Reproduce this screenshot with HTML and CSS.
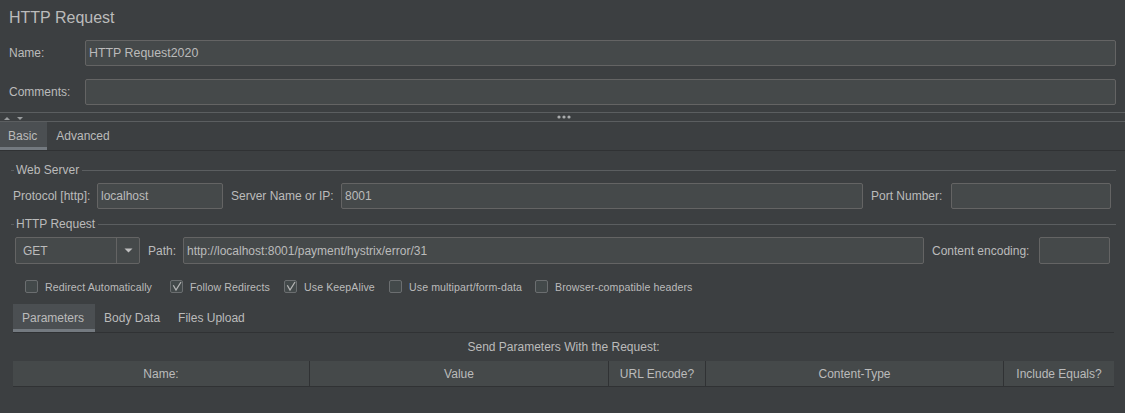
FILE: index.html
```html
<!DOCTYPE html>
<html>
<head>
<meta charset="utf-8">
<link rel="stylesheet" href="styles.css">
</head>
<body>
<div class="app">
  <div class="title">HTTP Request</div>
  <div class="field-row">
    <span class="lbl">Name:</span>
    <div class="input">HTTP Request2020</div>
  </div>
  <div class="field-row">
    <span class="lbl">Comments:</span>
    <div class="input"></div>
  </div>
  <div class="splitter">
    <svg class="arrows" width="26" height="8" viewBox="0 0 26 8">
      <polygon points="4,7 10,7 7,4" fill="#9a9d9f"/>
      <polygon points="17,4 23,4 20,7" fill="#9a9d9f"/>
    </svg>
    <svg class="dots" width="14" height="4" viewBox="0 0 14 4">
      <circle cx="2" cy="2" r="1.6" fill="#a9abad"/>
      <circle cx="7" cy="2" r="1.6" fill="#a9abad"/>
      <circle cx="12" cy="2" r="1.6" fill="#a9abad"/>
    </svg>
  </div>
  <div class="tabs main-tabs">
    <div class="tab active">Basic</div>
    <div class="tab">Advanced</div>
  </div>
  <div class="content">
    <div class="group-title"><span>Web Server</span></div>
    <div class="server-row">
      <span class="lbl-protocol">Protocol [http]:</span>
      <div class="input w-protocol">localhost</div>
      <span class="lbl-server">Server Name or IP:</span>
      <div class="input grow">8001</div>
      <span class="lbl-port">Port Number:</span>
      <div class="input w-port"></div>
    </div>
    <div class="group-title"><span>HTTP Request</span></div>
    <div class="req-row">
      <div class="combo">
        <span class="combo-text">GET</span>
        <span class="combo-btn">
          <svg width="9" height="5" viewBox="0 0 9 5"><polygon points="0.5,0.5 8.5,0.5 4.5,4.5" fill="#c0c0c0"/></svg>
        </span>
      </div>
      <span class="lbl-path">Path:</span>
      <div class="input grow tall">http://localhost:8001/payment/hystrix/error/31</div>
      <span class="lbl-enc">Content encoding:</span>
      <div class="input w-enc tall"></div>
    </div>
    <div class="checks">
      <div class="check"><span class="box"></span><span class="ctext">Redirect Automatically</span></div>
      <div class="check"><span class="box"><svg width="13" height="13" viewBox="0 0 13 13"><polyline points="3.3,5.3 6,10 11,2" fill="none" stroke="#b4b4b4" stroke-width="1.3"/></svg></span><span class="ctext">Follow Redirects</span></div>
      <div class="check"><span class="box"><svg width="13" height="13" viewBox="0 0 13 13"><polyline points="3.3,5.3 6,10 11,2" fill="none" stroke="#b4b4b4" stroke-width="1.3"/></svg></span><span class="ctext">Use KeepAlive</span></div>
      <div class="check"><span class="box"></span><span class="ctext">Use multipart/form-data</span></div>
      <div class="check"><span class="box"></span><span class="ctext">Browser-compatible headers</span></div>
    </div>
    <div class="tabs sub-tabs">
      <div class="tab active">Parameters</div>
      <div class="tab">Body Data</div>
      <div class="tab">Files Upload</div>
    </div>
    <div class="caption">Send Parameters With the Request:</div>
    <div class="table-head">
      <div class="th">Name:</div>
      <div class="th">Value</div>
      <div class="th">URL Encode?</div>
      <div class="th">Content-Type</div>
      <div class="th">Include Equals?</div>
    </div>
  </div>
</div>
</body>
</html>
```
FILE: styles.css
```css
html, body {
  margin: 0;
  padding: 0;
  background: #3c3f41;
}
body {
  width: 1125px;
  height: 413px;
  overflow: hidden;
  font-family: "Liberation Sans", Arial, sans-serif;
  font-size: 12px;
  color: #bbbbbb;
}
.app {
  display: flex;
  flex-direction: column;
}
.title {
  height: 32px;
  padding: 8px 9px 0;
  font-size: 16px;
  line-height: 20px;
}
.field-row {
  display: flex;
  align-items: center;
  height: 26px;
  padding: 0 9px;
  margin-bottom: 13px;
}
.field-row .lbl {
  width: 76px;
  flex: none;
}
.input {
  box-sizing: border-box;
  height: 26px;
  background: #45494a;
  border: 1px solid #646464;
  border-radius: 2px;
  padding: 0 3px;
  display: flex;
  align-items: center;
  white-space: nowrap;
  overflow: hidden;
  flex: 1;
}
.field-row .input {
  font-size: 12.4px;
}
.splitter {
  margin-top: -6px;
  height: 8px;
  border-top: 1px solid #5b5e60;
  border-bottom: 1px solid #5b5e60;
  display: flex;
  align-items: center;
}
.arrows {
  flex: none;
}
.dots {
  margin-left: 531px;
  flex: none;
}
.tabs {
  display: flex;
  height: 28px;
  border-bottom: 1px solid #303234;
}
.tab {
  display: flex;
  align-items: center;
  padding: 0 9px;
}
.tab.active {
  background: #4b4f52;
  box-shadow: inset 0 -3px 0 #747a80;
}
.main-tabs .tab {
  padding: 0 9px 0 9px;
}
.main-tabs .tab.active {
  padding: 0 10px 0 8px;
}
.content {
  padding: 0 9px 0 11px;
  display: flex;
  flex-direction: column;
}
.group-title {
  margin-top: 11px;
  height: 16px;
  display: flex;
  align-items: center;
}
.group-title::before {
  content: "";
  width: 3px;
  height: 1px;
  background: #5b5e60;
  margin-right: 2px;
}
.group-title::after {
  content: "";
  flex: 1;
  height: 1px;
  background: #5b5e60;
  margin-left: 3px;
}
.group-title + .req-row {
  margin-top: 5px;
}
.server-row {
  margin-top: 5px;
  height: 26px;
  display: flex;
  align-items: center;
  padding: 0 5px 0 2px;
}
.server-row + .group-title {
  margin-top: 7px;
}
.lbl-protocol { width: 84px; flex: none; }
.w-protocol { width: 126px; flex: none; }
.lbl-server { width: 110px; padding-left: 8px; flex: none; }
.grow { flex: 1; }
.lbl-port { width: 80px; padding-left: 8px; flex: none; }
.w-port { width: 160px; flex: none; }
.req-row {
  height: 27px;
  display: flex;
  align-items: center;
  padding: 0 6px 0 4px;
}
.tall { height: 27px; }
.combo {
  box-sizing: border-box;
  width: 125px;
  height: 27px;
  flex: none;
  display: flex;
  background: #45494a;
  border: 1px solid #646464;
  border-radius: 2px;
}
.combo-text {
  flex: 1;
  display: flex;
  align-items: center;
  padding-left: 7px;
}
.combo-btn {
  width: 22px;
  border-left: 1px solid #646464;
  display: flex;
  align-items: center;
  justify-content: center;
}
.lbl-path { width: 35px; padding-left: 8px; flex: none; }
.lbl-enc { width: 107px; padding-left: 8px; flex: none; }
.w-enc { width: 71px; flex: none; }
.checks {
  margin-top: 15px;
  height: 15px;
  display: grid;
  grid-template-columns: 145px 114px 105px 146px auto;
  padding-left: 14px;
  align-items: center;
}
.check {
  display: flex;
  align-items: center;
}
.box {
  box-sizing: border-box;
  width: 13px;
  height: 13px;
  border: 1px solid #6b6e70;
  border-radius: 2px;
  background: #43494a;
  flex: none;
  position: relative;
}
.box svg {
  position: absolute;
  left: -1px;
  top: -1px;
}
.ctext {
  margin-left: 7px;
  font-size: 10.6px;
  letter-spacing: 0.1px;
  white-space: nowrap;
}
.sub-tabs {
  margin: 10px 2px 0;
}
.sub-tabs .tab {
  padding: 0 9px;
}
.sub-tabs .tab.active {
  padding-right: 11px;
}
.caption {
  height: 28px;
  margin: 0 2px;
  display: flex;
  align-items: center;
  justify-content: center;
}
.table-head {
  margin: 0 2px;
  height: 25px;
  display: grid;
  grid-template-columns: 297px 299px 97px 298px 1fr;
  background: #45494a;
  border-bottom: 1px solid #303234;
}
.th {
  display: flex;
  align-items: center;
  justify-content: center;
  border-right: 1px solid #303234;
}
.th:last-child {
  border-right: none;
}
```
